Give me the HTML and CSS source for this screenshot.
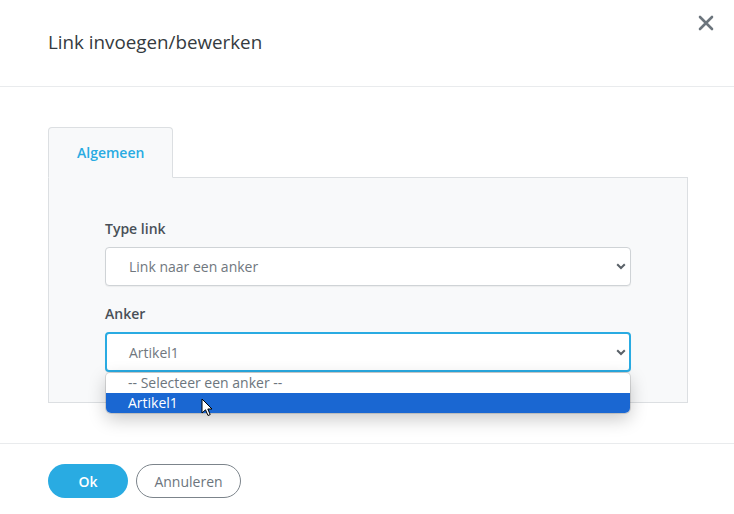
FILE: index.html
```html
<!DOCTYPE html>
<html lang="nl">

<head>
    <meta charset="UTF-8">
    <meta name="viewport" content="width=device-width, initial-scale=1.0">
    <title>Link invoegen/bewerken</title>
    <link rel="stylesheet" href="styles.css">
</head>

<body>
    <div class="modal">
        <div class="modal-header">
            <h1 class="modal-title">Link invoegen/bewerken</h1>
            <button class="close-btn" aria-label="Sluiten">
                <svg width="16" height="16" viewBox="0 0 16 16">
                    <path d="M2 2 L14 14 M14 2 L2 14" stroke="#6c757d" stroke-width="2.6" stroke-linecap="round" fill="none"/>
                </svg>
            </button>
        </div>

        <div class="modal-body">
            <div class="nav-tabs">
                <div class="tab active">Algemeen</div>
            </div>

            <div class="tab-pane">
                <div class="form-group">
                    <label>Type link</label>
                    <div class="select">
                        <span>Link naar een anker</span>
                        <svg class="chevron" width="10" height="7" viewBox="0 0 10 7">
                            <path d="M1.2 1.2 L5 5 L8.8 1.2" stroke="#5a6168" stroke-width="2" fill="none"/>
                        </svg>
                    </div>
                </div>

                <div class="form-group">
                    <label>Anker</label>
                    <div class="select-wrap">
                        <div class="select focus">
                            <span>Artikel1</span>
                            <svg class="chevron" width="10" height="7" viewBox="0 0 10 7">
                                <path d="M1.2 1.2 L5 5 L8.8 1.2" stroke="#5a6168" stroke-width="2" fill="none"/>
                            </svg>
                        </div>
                        <div class="dropdown">
                            <div class="option">-- Selecteer een anker --</div>
                            <div class="option selected">Artikel1</div>
                            <svg class="cursor" width="14" height="20" viewBox="0 0 14 20">
                                <path d="M1 1 L1 15 L4.5 11.8 L7 17.5 L9.2 16.6 L6.8 11 L11 11 Z" fill="#fff" stroke="#000" stroke-width="1" stroke-linejoin="round"/>
                            </svg>
                        </div>
                    </div>
                </div>
            </div>
        </div>

        <div class="modal-footer">
            <button class="btn btn-primary">Ok</button>
            <button class="btn btn-outline">Annuleren</button>
        </div>
    </div>
</body>

</html>
```

FILE: styles.css
```css
* {
    margin: 0;
    padding: 0;
    box-sizing: border-box;
    font-family: 'Open Sans', 'Noto Sans', sans-serif;
}

:root {
    --primary: #29abe2;
    --text: #343a40;
    --muted: #6c757d;
    --border: #dcdfe2;
    --bg-light: #f8f9fa;
}

body {
    background: white;
    width: 734px;
    height: 514px;
    overflow: hidden;
}

.modal {
    display: flex;
    flex-direction: column;
}

.modal-header {
    height: 87px;
    border-bottom: 1px solid #e9ebed;
    display: flex;
    justify-content: space-between;
    padding: 0 20px 0 48px;
}

.modal-title {
    font-size: 18.8px;
    font-weight: 400;
    color: var(--text);
    align-self: center;
    margin-top: -2px;
}

.close-btn {
    background: none;
    border: none;
    margin-top: 15px;
    align-self: flex-start;
    width: 16px;
    height: 16px;
    cursor: pointer;
}

.close-btn svg {
    display: block;
}

.modal-body {
    padding: 40px 46px 40px 48px;
}

.nav-tabs {
    display: flex;
}

.tab {
    width: 125px;
    height: 51px;
    margin-bottom: -1px;
    border: 1px solid var(--border);
    border-bottom-color: var(--bg-light);
    border-radius: 4px 4px 0 0;
    background: var(--bg-light);
    color: var(--primary);
    font-size: 14px;
    font-weight: 600;
    padding-left: 28px;
    line-height: 50px;
    position: relative;
    z-index: 1;
}

.tab-pane {
    background: var(--bg-light);
    border: 1px solid var(--border);
    padding: 40px 56px 30px 56px;
}

.form-group + .form-group {
    margin-top: 17px;
}

.form-group label {
    display: block;
    font-size: 14px;
    font-weight: 600;
    color: #495057;
    line-height: 21px;
    margin-bottom: 8px;
}

.select {
    height: 39px;
    background: white;
    border: 1px solid #cfd3d6;
    border-radius: 4px;
    display: flex;
    align-items: center;
    justify-content: space-between;
    padding: 0 4px 0 23px;
    color: #70777e;
    font-size: 14px;
    box-shadow: 0 1px 1px rgba(0, 0, 0, 0.05);
}

.select.focus {
    height: 40px;
    border: 2px solid var(--primary);
    padding-left: 22px;
    padding-right: 3px;
}

.select-wrap {
    position: relative;
}

.dropdown {
    position: absolute;
    top: 41px;
    left: 1px;
    right: 1px;
    background: white;
    border-radius: 4px 4px 5px 5px;
    box-shadow: 0 0 0 1px rgba(0, 0, 0, 0.12), 0 6px 18px rgba(0, 0, 0, 0.22);
    z-index: 5;
}

.option {
    height: 20px;
    line-height: 19px;
    font-size: 14px;
    padding-left: 22px;
    color: #6c757d;
}

.option.selected {
    background: #1a67d2;
    color: white;
    border-radius: 0 0 5px 5px;
}

.cursor {
    position: absolute;
    left: 95px;
    top: 25px;
}

.modal-footer {
    border-top: 1px solid #e9ebed;
    padding: 20px 48px;
    display: flex;
    gap: 8px;
}

.btn {
    height: 34px;
    border-radius: 17px;
    font-size: 14px;
    cursor: pointer;
}

.btn-primary {
    width: 80px;
    background: var(--primary);
    color: white;
    border: none;
    font-weight: 600;
}

.btn-outline {
    width: 105px;
    background: white;
    color: var(--muted);
    border: 1px solid #7c848b;
}
```
